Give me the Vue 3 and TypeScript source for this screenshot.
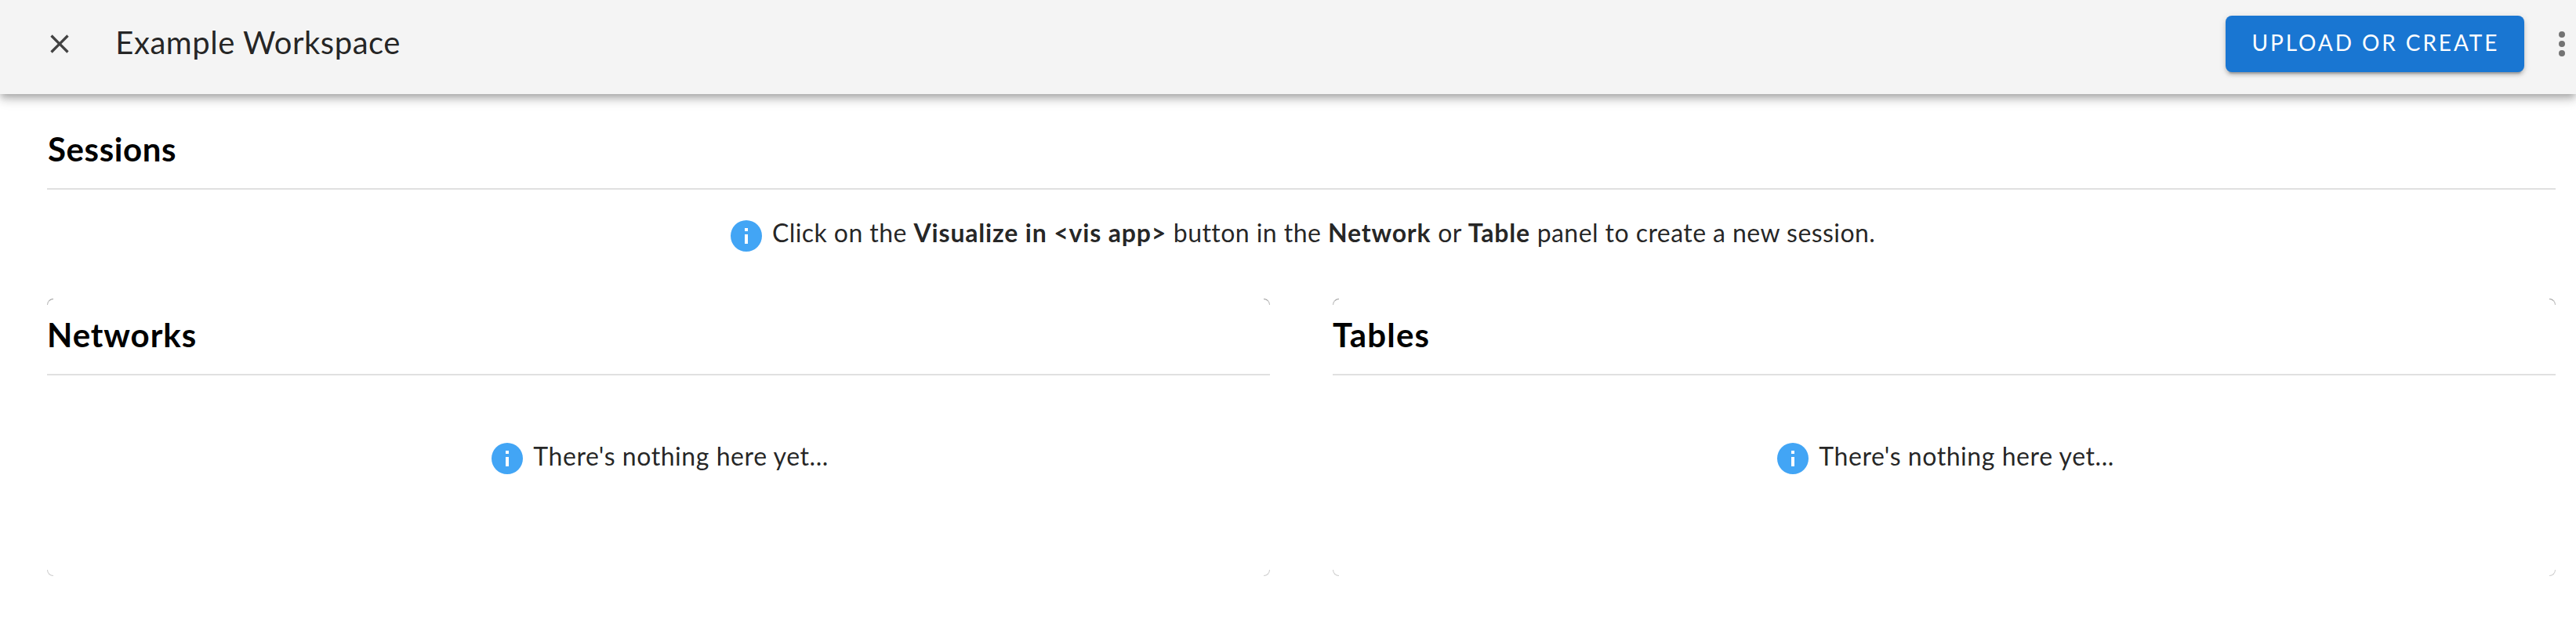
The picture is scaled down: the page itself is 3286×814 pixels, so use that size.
<script setup lang="ts">
interface Panel {
  title: string
  kind: string
  message: string
}

const panels: Panel[] = [
  { title: 'Networks', kind: 'networks', message: "There's nothing here yet..." },
  { title: 'Tables', kind: 'tables', message: "There's nothing here yet..." },
]
const corners: string[] = ['tl', 'tr', 'bl', 'br']
</script>

<template>
  <div class="page">
    <header class="app-bar">
      <svg class="close" viewBox="0 0 24 24" aria-label="Close">
        <path d="M19,6.41L17.59,5L12,10.59L6.41,5L5,6.41L10.59,12L5,17.59L6.41,19L12,13.41L17.59,19L19,17.59L13.41,12L19,6.41Z" />
      </svg>
      <h1 class="title">Example Workspace</h1>
      <button class="upload" type="button">UPLOAD OR CREATE</button>
      <svg class="menu" viewBox="0 0 24 24" aria-label="More">
        <path d="M12,16A2,2 0 0,1 14,18A2,2 0 0,1 12,20A2,2 0 0,1 10,18A2,2 0 0,1 12,16M12,10A2,2 0 0,1 14,12A2,2 0 0,1 12,14A2,2 0 0,1 10,12A2,2 0 0,1 12,10M12,4A2,2 0 0,1 14,6A2,2 0 0,1 12,8A2,2 0 0,1 10,6A2,2 0 0,1 12,4Z" />
      </svg>
    </header>

    <main class="content">
      <section>
        <h2 class="heading sessions">Sessions</h2>
        <div class="message hint">
          <svg class="info" viewBox="0 0 24 24">
            <path d="M13,9H11V7H13M13,17H11V11H13M12,2A10,10 0 0,0 2,12A10,10 0 0,0 12,22A10,10 0 0,0 22,12A10,10 0 0,0 12,2Z" />
          </svg>
          <p class="copy hint-copy">Click on the <strong>Visualize in &lt;vis app&gt;</strong> button in the <strong>Network</strong> or <strong>Table</strong> panel to create a new session.</p>
        </div>
      </section>

      <div class="panels">
        <section v-for="panel in panels" :key="panel.kind" class="panel">
          <i v-for="corner in corners" :key="corner" class="corner" :class="corner"></i>
          <h2 class="heading" :class="panel.kind">{{ panel.title }}</h2>
          <div class="message empty">
            <svg class="info" viewBox="0 0 24 24">
              <path d="M13,9H11V7H13M13,17H11V11H13M12,2A10,10 0 0,0 2,12A10,10 0 0,0 12,22A10,10 0 0,0 22,12A10,10 0 0,0 12,2Z" />
            </svg>
            <p class="copy">{{ panel.message }}</p>
          </div>
        </section>
      </div>
    </main>
  </div>
</template>

<style>
body {
  margin: 0;
  background: #fff;
}
</style>

<style scoped>
.page {
  height: 814px;
  overflow: hidden;
  background: #fff;
  color: rgba(0, 0, 0, 0.87);
  font-family: "Lato", "Liberation Sans", sans-serif;
}
h1,
h2,
p {
  margin: 0;
}
.app-bar {
  box-sizing: border-box;
  height: 120px;
  padding: 20px 0 0 56px;
  display: flex;
  align-items: flex-start;
  background: #f4f4f4;
  box-shadow:
    0 4px 8px -2px rgba(0, 0, 0, 0.2),
    0 8px 10px 0 rgba(0, 0, 0, 0.14),
    0 2px 20px 0 rgba(0, 0, 0, 0.12);
}
.close {
  flex: none;
  width: 40px;
  height: 40px;
  margin-top: 16px;
  fill: #424242;
}
.title {
  margin-left: 51.3px;
  font-size: 40px;
  font-weight: 400;
  line-height: 69px;
  letter-spacing: 0.53px;
}
.upload {
  box-sizing: border-box;
  width: 381px;
  height: 72px;
  margin-left: auto;
  padding: 0 0 3px 33.5px;
  border: 0;
  border-radius: 8px;
  background: #1976d2;
  color: #fff;
  font: 400 28px/69px "Lato", sans-serif;
  letter-spacing: 2.9px;
  text-align: left;
  white-space: nowrap;
  box-shadow:
    0 6px 2px -4px rgba(0, 0, 0, 0.2),
    0 4px 4px 0 rgba(0, 0, 0, 0.14),
    0 2px 10px 0 rgba(0, 0, 0, 0.12);
}
.menu {
  flex: none;
  width: 48px;
  height: 48px;
  margin: 12px -6px 0 24px;
  fill: #737373;
}
.content {
  padding: 20px 26px 0 60px;
}
.heading {
  border-bottom: 2px solid #e0e0e0;
  color: #000;
  font-size: 42px;
  font-weight: 700;
}
.sessions {
  padding: 0 0 0 1px;
  line-height: 100px;
  letter-spacing: 0.6px;
}
.networks,
.tables {
  padding-bottom: 4px;
  line-height: 92px;
}
.networks {
  letter-spacing: 0.93px;
}
.tables {
  letter-spacing: 1.2px;
}
.message {
  display: flex;
  justify-content: center;
  align-items: flex-start;
  gap: 9.2px;
}
.info {
  flex: none;
  width: 48px;
  height: 48px;
  fill: #42a5f5;
}
.copy {
  font-size: 32px;
  line-height: 63px;
  letter-spacing: 0.56px;
  white-space: nowrap;
}
.hint {
  height: 85px;
  padding-top: 23px;
}
.hint .info {
  margin-top: 12px;
}
.hint-copy {
  letter-spacing: 0.44px;
}
.hint-copy strong {
  font-weight: 700;
  letter-spacing: 0.82px;
}
.panels {
  display: grid;
  grid-template-columns: 1fr 1fr;
  gap: 80px;
  margin-top: 31px;
}
.panel {
  position: relative;
  height: 354px;
}
.empty {
  padding-top: 71px;
}
.empty .info {
  margin-top: 11px;
}
.corner {
  position: absolute;
  box-sizing: border-box;
  width: 8px;
  height: 8px;
}
.tl {
  top: 0;
  left: 0;
  border-top: 1px solid #999;
  border-left: 1px solid #bbb;
  border-top-left-radius: 8px;
}
.tr {
  top: 0;
  right: 0;
  border-top: 1px solid #999;
  border-right: 1px solid #bbb;
  border-top-right-radius: 8px;
}
.bl {
  bottom: 0;
  left: 0;
  border-bottom: 1px solid #ccc;
  border-left: 1px solid #ccc;
  border-bottom-left-radius: 8px;
}
.br {
  right: 0;
  bottom: 0;
  border-right: 1px solid #ccc;
  border-bottom: 1px solid #ccc;
  border-bottom-right-radius: 8px;
}
</style>
